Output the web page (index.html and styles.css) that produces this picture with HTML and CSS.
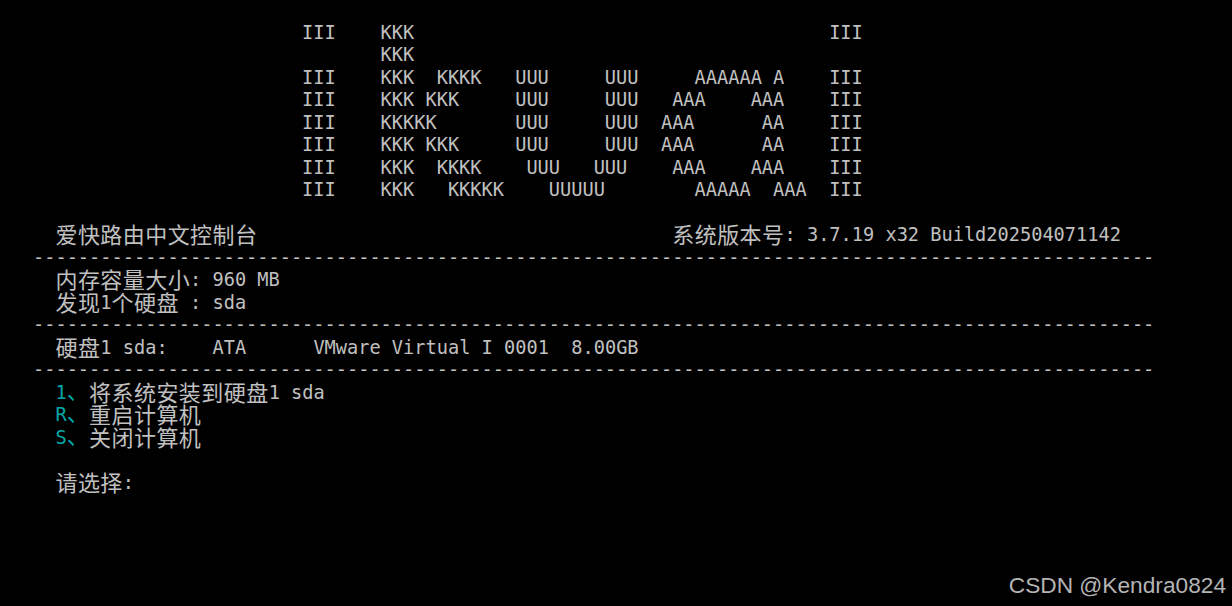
FILE: index.html
```html
<!DOCTYPE html>
<html lang="zh-CN">
<head>
<meta charset="utf-8">
<title>爱快路由中文控制台</title>
<link rel="stylesheet" href="styles.css">
</head>
<body>
<div class="term">
<div class="ln">                        III    KKK                                     III</div>
<div class="ln">                               KKK</div>
<div class="ln">                        III    KKK  KKKK   UUU     UUU     AAAAAA A    III</div>
<div class="ln">                        III    KKK KKK     UUU     UUU   AAA    AAA    III</div>
<div class="ln">                        III    KKKKK       UUU     UUU  AAA      AA    III</div>
<div class="ln">                        III    KKK KKK     UUU     UUU  AAA      AA    III</div>
<div class="ln">                        III    KKK  KKKK    UUU   UUU    AAA    AAA    III</div>
<div class="ln">                        III    KKK   KKKKK    UUUUU        AAAAA  AAA  III</div>
<div class="ln"></div>
<div class="ln">  <span class="z">爱快路由中文控制台</span>                                     <span class="z">系统版本号</span>: 3.7.19 x32 Build202504071142</div>
<div class="ln">----------------------------------------------------------------------------------------------------</div>
<div class="ln">  <span class="z">内存容量大小</span>: 960 MB</div>
<div class="ln">  <span class="z">发现</span>1<span class="z">个硬盘</span> : sda</div>
<div class="ln">----------------------------------------------------------------------------------------------------</div>
<div class="ln">  <span class="z">硬盘</span>1 sda:    ATA      VMware Virtual I 0001  8.00GB</div>
<div class="ln">----------------------------------------------------------------------------------------------------</div>
<div class="ln">  <span class="k">1<span class="z">、</span></span><span class="z">将系统安装到硬盘</span>1 sda</div>
<div class="ln">  <span class="k">R<span class="z">、</span></span><span class="z">重启计算机</span></div>
<div class="ln">  <span class="k">S<span class="z">、</span></span><span class="z">关闭计算机</span></div>
<div class="ln"></div>
<div class="ln">  <span class="z">请选择</span>:</div>
</div>
<div class="wm">CSDN @Kendra0824</div>
</body>
</html>
```
FILE: styles.css
```css
html, body {
  margin: 0;
  padding: 0;
  background: #000;
}
body {
  width: 1232px;
  height: 606px;
  overflow: hidden;
  position: relative;
}
.term {
  padding: 21.6px 0 0 33px;
  font-family: "DejaVu Sans Mono", "Liberation Mono", monospace;
  font-size: 18.64px;
  color: #c0c0c0;
}
.ln {
  height: 22.5px;
  line-height: 22.5px;
  white-space: pre;
}
.z {
  font-family: "Noto Sans CJK SC", "Noto Sans CJK JP", sans-serif;
  font-size: 22px;
  letter-spacing: 0.44px;
  line-height: 0;
  vertical-align: -1.5px;
}
.k {
  color: #00a8a8;
}
.k .z {
  vertical-align: 0;
}
.wm {
  position: absolute;
  right: 6px;
  bottom: 8px;
  line-height: 25px;
  font-family: "Liberation Sans", Arial, sans-serif;
  font-size: 22.7px;
  color: #b4b4b4;
}
```
